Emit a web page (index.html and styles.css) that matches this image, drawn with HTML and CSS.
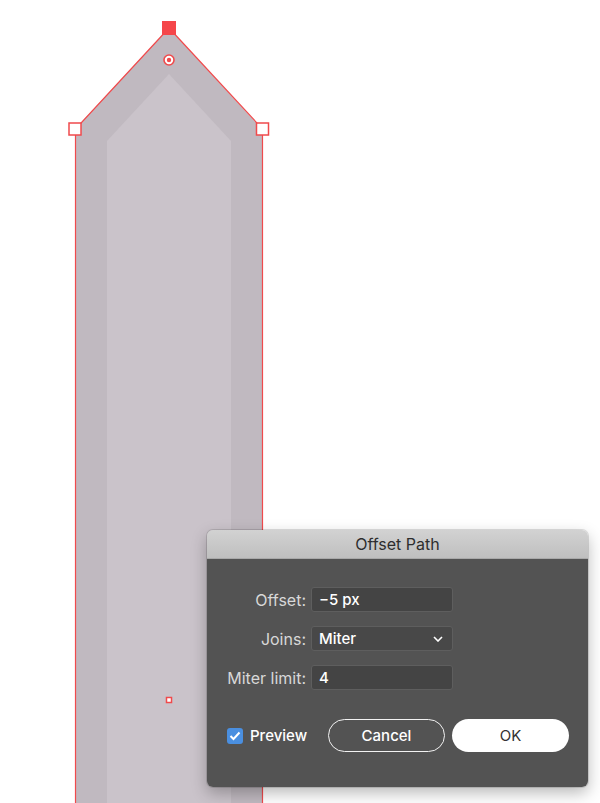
FILE: index.html
```html
<!DOCTYPE html>
<html>
<head>
  <title>Offset Path</title>
  <link rel="stylesheet" href="styles.css">
</head>
<body>
  <div class="artboard">
    <svg class="art" width="600" height="803" viewBox="0 0 600 803">
      <!-- original shape -->
      <path d="M75 803 V129 L169 28 L262 129 V803 Z" fill="#c0b9c0"/>
      <!-- offset result -->
      <path d="M107 803 V141 L169 74 L231 141 V803 Z" fill="#cac3ca"/>
      <!-- selection outline -->
      <path d="M75.5 803 V129 L169 28 L262.5 129 V803" fill="none" stroke="#f04a4c" stroke-width="1.2"/>
      <!-- anchors -->
      <rect x="162" y="21" width="14" height="14" fill="#f5464a"/>
      <rect x="69" y="123" width="12" height="12" fill="#fff" stroke="#f04a4c" stroke-width="1.5"/>
      <rect x="256.5" y="123" width="12" height="12" fill="#fff" stroke="#f04a4c" stroke-width="1.5"/>
      <!-- center point -->
      <circle cx="169" cy="60" r="5" fill="#fff" stroke="#f04a4c" stroke-width="1.6"/>
      <circle cx="169" cy="60" r="2.2" fill="#f04a4c"/>
      <rect x="166.5" y="697.5" width="5" height="5" fill="#fff" stroke="#f04a4c" stroke-width="1.5"/>
    </svg>

    <div class="dialog">
      <div class="dialog-title">Offset Path</div>
      <div class="dialog-body">
        <div class="fields">
          <label class="field-label">Offset:</label>
          <div class="field">&minus;5 px</div>

          <label class="field-label">Joins:</label>
          <div class="field select">
            <span>Miter</span>
            <svg class="chevron" width="10" height="6" viewBox="0 0 10 6">
              <path d="M1 1 L5 5 L9 1" fill="none" stroke="#fff" stroke-width="1.6"/>
            </svg>
          </div>

          <label class="field-label">Miter limit:</label>
          <div class="field">4</div>
        </div>

        <div class="actions">
          <label class="check">
            <span class="box">
              <svg width="12" height="10" viewBox="0 0 12 10">
                <path d="M1.5 5 L4.5 8 L10.5 1.5" fill="none" stroke="#fff" stroke-width="2"/>
              </svg>
            </span>
            Preview
          </label>
          <div class="buttons">
            <button class="btn btn-cancel">Cancel</button>
            <button class="btn btn-ok">OK</button>
          </div>
        </div>
      </div>
    </div>
  </div>
</body>
</html>
```

FILE: styles.css
```css
body {
  margin: 0;
  background: #fff;
  font-family: Inter, "Noto Sans", Roboto, sans-serif;
}

.artboard {
  position: relative;
  width: 600px;
  height: 803px;
  overflow: hidden;
}

.art {
  display: block;
}

.dialog {
  position: absolute;
  left: 207px;
  top: 530px;
  width: 381px;
  border-radius: 6px;
  overflow: hidden;
  box-shadow: 0 0 0 1px rgba(0, 0, 0, 0.12), 0 6px 16px rgba(0, 0, 0, 0.28);
}

.dialog-title {
  height: 28px;
  line-height: 29px;
  text-align: center;
  font-size: 16px;
  color: #2e2e2e;
  background: linear-gradient(#d2d2d2, #bfbfbf);
  border-bottom: 1px solid #a9a9a9;
}

.dialog-body {
  background: #535353;
  padding: 28px 19px 35px 20px;
}

.fields {
  display: grid;
  grid-template-columns: 79px 142px;
  column-gap: 5px;
  row-gap: 14px;
  align-items: center;
}

.field-label {
  text-align: right;
  font-size: 16px;
  color: #d8d8d8;
  white-space: nowrap;
}

.field {
  box-sizing: border-box;
  height: 25px;
  line-height: 23px;
  padding: 0 7px;
  background: #444;
  border: 1px solid #5e5e5e;
  border-radius: 3px;
  color: #fff;
  font-size: 15px;
  font-weight: 500;
}

.select {
  display: flex;
  justify-content: space-between;
  align-items: center;
  background: #484848;
}

.chevron {
  margin-right: 2px;
}

.actions {
  display: flex;
  align-items: center;
  justify-content: space-between;
  margin-top: 29px;
}

.check {
  display: flex;
  align-items: center;
  gap: 7px;
  color: #fff;
  font-size: 15px;
  font-weight: 500;
}

.box {
  display: flex;
  align-items: center;
  justify-content: center;
  width: 16px;
  height: 16px;
  border-radius: 3px;
  background: #4a8fe0;
}

.buttons {
  display: flex;
  gap: 7px;
}

.btn {
  width: 117px;
  height: 33px;
  border-radius: 17px;
  font-family: inherit;
  font-size: 15px;
  font-weight: 500;
}

.btn-cancel {
  background: transparent;
  border: 1.5px solid #f2f2f2;
  color: #fff;
}

.btn-ok {
  background: #fff;
  border: none;
  color: #333;
  font-weight: 400;
}
```
